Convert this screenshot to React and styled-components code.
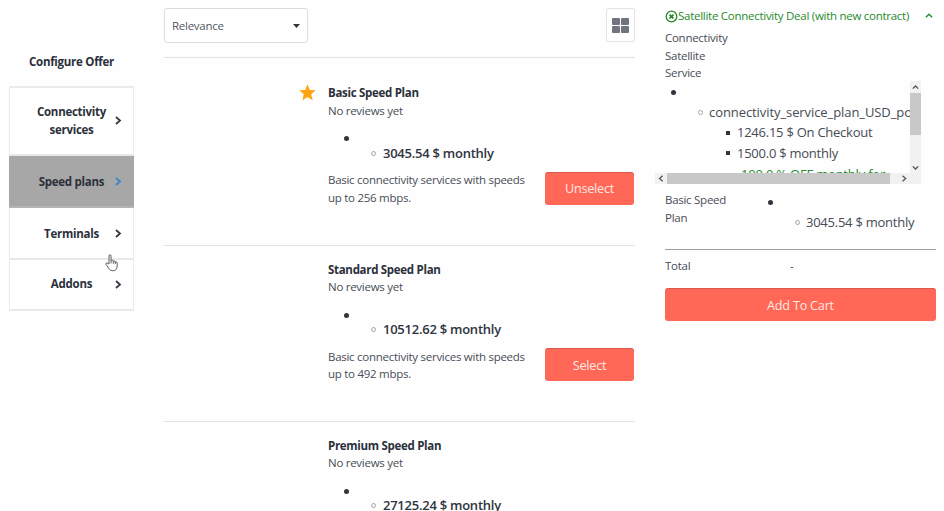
import React from "react";
import styled, { createGlobalStyle } from "styled-components";

const GlobalStyle = createGlobalStyle`
  * { box-sizing: border-box; }
  body {
    margin: 0;
    overflow: hidden;
    background: #fefefe;
    color: #484d57;
    font-family: "Open Sans", "Noto Sans", sans-serif;
    font-size: 11.5px;
    line-height: 17.5px;
    letter-spacing: -0.27px;
  }
`;

const Page = styled.div`
  display: grid;
  grid-template-columns: 125px 471px 271px;
  column-gap: 30px;
  padding-left: 9px;
  height: 511px;
  overflow: hidden;
`;

/* Steps */
const Sidebar = styled.aside`
  position: relative;
  padding-top: 53px;
`;
const SidebarTitle = styled.h2`
  margin: 0 0 15px;
  font-size: 11.5px;
  line-height: 17.5px;
  font-weight: 700;
  color: #2b303b;
  text-align: center;
`;
const StepList = styled.nav`
  border: 1px solid #ebebeb;
  border-top-width: 2px;
`;
const Step = styled.a`
  display: flex;
  align-items: center;
  height: ${(p) => p.$height}px;
  padding-top: ${(p) => (p.$last || p.$tall ? 0 : 2)}px;
  border-bottom: ${(p) => (p.$last ? 1 : 2)}px solid ${(p) => (p.$active ? "#b5b5b5" : "#e8e8e8")};
  background: ${(p) => (p.$active ? "#a7a7a7" : "#fff")};
  margin: ${(p) => (p.$active ? "0 -1px" : "0")};
  padding-left: ${(p) => (p.$active ? 26 : 25)}px;
  padding-right: ${(p) => (p.$active ? 11 : 10)}px;
  font-weight: 700;
  color: #2b303b;
  text-align: center;
  svg { color: ${(p) => (p.$active ? "#3c82cf" : "#343a43")}; }
`;
const StepName = styled.span`
  flex: 1;
  margin: 0 3px 0 -3px;
`;
const HandCursor = styled.svg`
  position: absolute;
  left: 96px;
  top: 254px;
`;

/* Products */
const Toolbar = styled.div`
  display: flex;
  justify-content: space-between;
  align-items: flex-start;
  height: 58px;
  padding-top: 8px;
  border-bottom: 1px solid #e2e2e2;
`;
const SortSelect = styled.button`
  display: flex;
  align-items: center;
  justify-content: space-between;
  width: 144px;
  height: 35px;
  padding: 0 7px 0 7px;
  border: 1px solid #dcdcdc;
  border-radius: 3px;
  background: #fff;
  color: #535861;
  font: inherit;
  letter-spacing: inherit;
`;
const ViewButton = styled.button`
  display: grid;
  place-items: center;
  width: 29px;
  height: 34px;
  padding: 0;
  border: 1px solid #e3e3e3;
  border-radius: 2px;
  background: #fff;
`;
const Product = styled.article`
  display: grid;
  grid-template-columns: 164px 206px 1fr;
  justify-content: start;
  height: ${(p) => (p.$first ? 187.5 : 176.2)}px;
  padding-top: ${(p) => (p.$first ? 26 : 15)}px;
  border-bottom: 1px solid #e2e2e2;
`;
const StarCell = styled.div`
  display: flex;
  justify-content: flex-end;
  padding-right: 12px;
`;
const ProductName = styled.h3`
  margin: 0;
  font-size: 11.5px;
  line-height: 17.5px;
  font-weight: 700;
  letter-spacing: -0.3px;
  color: #2b303b;
`;
const PriceList = styled.div`
  height: 52px;
  padding: 17px 0 0 16px;
`;
const Dot = styled.span`
  display: block;
  flex: none;
  width: ${(p) => (p.$square ? 4 : 5)}px;
  height: ${(p) => (p.$square ? 4 : 5)}px;
  border-radius: ${(p) => (p.$square ? 0 : "50%")};
  background: ${(p) => (p.$hollow ? "transparent" : "#30343c")};
  border: ${(p) => (p.$hollow ? "1px solid #a3a7ad" : "0")};
`;
const Price = styled.div`
  display: flex;
  align-items: center;
  gap: ${(p) => p.$gap || 6}px;
  margin-top: ${(p) => p.$top || 0}px;
  padding-left: ${(p) => p.$indent}px;
  height: 20.5px;
  font-size: 13px;
  font-weight: ${(p) => (p.$strong ? 600 : 400)};
  letter-spacing: ${(p) => p.$spacing || -0.25}px;
  color: ${(p) => (p.$strong ? "#2f343f" : "#464b55")};
  white-space: nowrap;
`;
const Action = styled.button`
  width: ${(p) => (p.$wide ? "100%" : "89px")};
  height: 33px;
  margin-top: ${(p) => (p.$wide ? 0 : "87.5px")};
  padding: 0;
  border: 0;
  border-radius: 3px;
  border-top: 1px solid #d9594c;
  background: #ff6757;
  color: #ffe7e2;
  font-family: inherit;
  font-size: 12.6px;
  letter-spacing: -0.2px;
`;
const ActionCell = styled.div`
  padding-left: 11px;
`;

/* Cart summary */
const DealHeader = styled.div`
  display: flex;
  align-items: center;
  height: 20px;
  margin-top: 6px;
  color: #258b2b;
  white-space: nowrap;
  svg:last-child { margin-left: auto; margin-right: 3px; }
`;
const ServiceName = styled.div`
  width: 72px;
  padding-top: 3px;
  height: 55px;
`;
const ScrollPane = styled.div`
  display: grid;
  grid-template-columns: 255px 11px;
  grid-template-rows: 92px 11px;
  width: 266px;
  margin-left: -10px;
`;
const ScrollContent = styled.div`
  overflow: hidden;
  padding: 9px 0 0 16px;
`;
const Discount = styled.div`
  padding-left: 66px;
  height: 20px;
  font-size: 13px;
  line-height: 20px;
  letter-spacing: -0.2px;
  color: #258b2b;
  white-space: nowrap;
`;
const Track = styled.div`
  display: flex;
  flex-direction: ${(p) => (p.$vertical ? "column" : "row")};
  background: #f1f1f1;
  ${(p) => (p.$vertical ? "" : "grid-column: 1 / -1; padding-right: 11px;")}
`;
const TrackArrow = styled.span`
  display: grid;
  place-items: center;
  flex: 0 0 12px;
  color: #505050;
`;
const Thumb = styled.span`
  flex: 0 0 ${(p) => p.$length}px;
  margin-bottom: ${(p) => (p.$vertical ? "auto" : "0")};
  margin-right: ${(p) => (p.$vertical ? "0" : "auto")};
  background: #c8c8c8;
`;
const PlanLine = styled.div`
  display: grid;
  grid-template-columns: 103px 1fr;
  height: 66px;
  padding-top: 7px;
  border-bottom: 1px solid #9c9c9c;
`;
const PlanName = styled.div`
  width: 70px;
`;
const PlanPrice = styled.div`
  padding-top: 9px;
`;
const Total = styled.div`
  display: grid;
  grid-template-columns: 125px 1fr;
  height: 38px;
  padding-top: 7px;
`;

const Chevron = ({ dir = "right", size = 8, weight = 1.6 }) => {
  const paths = {
    right: "M2 1 L6 4.5 L2 8",
    left: "M6 1 L2 4.5 L6 8",
    up: "M1 6 L4.5 2.5 L8 6",
    down: "M1 3 L4.5 6.5 L8 3",
  };
  return (
    <svg width={size} height={size} viewBox="0 0 9 9" fill="none" stroke="currentColor" strokeWidth={weight}>
      <path d={paths[dir]} />
    </svg>
  );
};

const steps = [
  { name: "Connectivity services", height: 68, tall: true },
  { name: "Speed plans", height: 52, active: true },
  { name: "Terminals", height: 52 },
  { name: "Addons", height: 50, last: true },
];

const products = [
  { name: "Basic Speed Plan", price: "3045.54 $ monthly", speed: 256, selected: true },
  { name: "Standard Speed Plan", price: "10512.62 $ monthly", speed: 492 },
  { name: "Premium Speed Plan", price: "27125.24 $ monthly" },
];

export default function App() {
  return (
    <>
      <GlobalStyle />
      <Page>
        <Sidebar>
          <SidebarTitle>Configure Offer</SidebarTitle>
          <StepList>
            {steps.map((s) => (
              <Step key={s.name} $height={s.height} $active={s.active} $last={s.last} $tall={s.tall}>
                <StepName>{s.name}</StepName>
                <Chevron size={9} weight={1.8} />
              </Step>
            ))}
          </StepList>
          <HandCursor width="13" height="18" viewBox="0 0 13 18">
            <path
              d="M4 10 V2 Q4 .8 5 .8 Q6 .8 6 2 V6.5 Q8 5.6 8.3 7 Q10 6.4 10.3 7.8 Q12.2 7.4 12.2 9.3 V12 Q12 16.8 7.8 16.8 Q5.3 16.8 3.8 14.4 L.9 10.3 Q.6 8.7 2.2 9 Z M6 6.5 V9.5 M8.3 7 V9.8 M10.3 7.8 V10"
              fill="#fff"
              stroke="#5d5d5d"
              strokeWidth="1"
            />
          </HandCursor>
        </Sidebar>

        <main>
          <Toolbar>
            <SortSelect>
              Relevance
              <svg width="7" height="4" viewBox="0 0 7 4">
                <path d="M0 0H7L3.5 4Z" fill="#30343c" />
              </svg>
            </SortSelect>
            <ViewButton aria-label="Grid view">
              <svg width="17" height="15" viewBox="0 0 17 15" fill="#70747c">
                <rect width="8" height="7" rx="1" />
                <rect x="9" width="8" height="7" rx="1" />
                <rect y="8" width="8" height="7" rx="1" />
                <rect x="9" y="8" width="8" height="7" rx="1" />
              </svg>
            </ViewButton>
          </Toolbar>
          {products.map((p, i) => (
            <Product key={p.name} $first={i === 0}>
              <StarCell>
                {p.selected && (
                  <svg width="17" height="17" viewBox="0 0 17 17">
                    <path d="M8.5 .2 L10.8 5.9 L16.8 6.3 L12.2 10.2 L13.7 16.3 L8.5 13 L3.3 16.3 L4.8 10.2 L.2 6.3 L6.2 5.9 Z" fill="#ffa30f" />
                  </svg>
                )}
              </StarCell>
              <div>
                <ProductName>{p.name}</ProductName>
                <div>No reviews yet</div>
                <PriceList>
                  <Dot />
                  <Price $strong $indent={27} $gap={7} $top={2}>
                    <Dot $hollow />
                    {p.price}
                  </Price>
                </PriceList>
                {p.speed && <div>{`Basic connectivity services with speeds up to ${p.speed} mbps.`}</div>}
              </div>
              {p.speed && (
                <ActionCell>
                  <Action>{p.selected ? "Unselect" : "Select"}</Action>
                </ActionCell>
              )}
            </Product>
          ))}
        </main>

        <aside>
          <DealHeader>
            <svg width="13" height="13" viewBox="0 0 13 13" fill="none" stroke="currentColor">
              <circle cx="6.5" cy="6.5" r="5.3" strokeWidth="1.3" />
              <path d="M4.6 4.6 L8.4 8.4 M8.4 4.6 L4.6 8.4" strokeWidth="1.8" />
            </svg>
            Satellite Connectivity Deal (with new contract)
            <Chevron dir="up" />
          </DealHeader>
          <ServiceName>Connectivity Satellite Service</ServiceName>
          <ScrollPane>
            <ScrollContent>
              <Dot />
              <Price $indent={27} $top={7} $spacing={-0.08}>
                <Dot $hollow />
                connectivity_service_plan_USD_po
              </Price>
              <Price $indent={55} $gap={7}>
                <Dot $square />
                1246.15 $ On Checkout
              </Price>
              <Price $indent={55} $gap={7}>
                <Dot $square />
                1500.0 $ monthly
              </Price>
              <Discount>-100.0 % OFF monthly for</Discount>
            </ScrollContent>
            <Track $vertical>
              <TrackArrow><Chevron dir="up" size={7} /></TrackArrow>
              <Thumb $vertical $length={42} />
              <TrackArrow><Chevron dir="down" size={7} /></TrackArrow>
            </Track>
            <Track>
              <TrackArrow><Chevron dir="left" size={7} /></TrackArrow>
              <Thumb $length={223} />
              <TrackArrow><Chevron size={7} /></TrackArrow>
            </Track>
          </ScrollPane>
          <PlanLine>
            <PlanName>Basic Speed Plan</PlanName>
            <PlanPrice>
              <Dot />
              <Price $indent={27} $top={7}>
                <Dot $hollow />
                3045.54 $ monthly
              </Price>
            </PlanPrice>
          </PlanLine>
          <Total>
            <span>Total</span>
            <span>-</span>
          </Total>
          <Action $wide>Add To Cart</Action>
        </aside>
      </Page>
    </>
  );
}
